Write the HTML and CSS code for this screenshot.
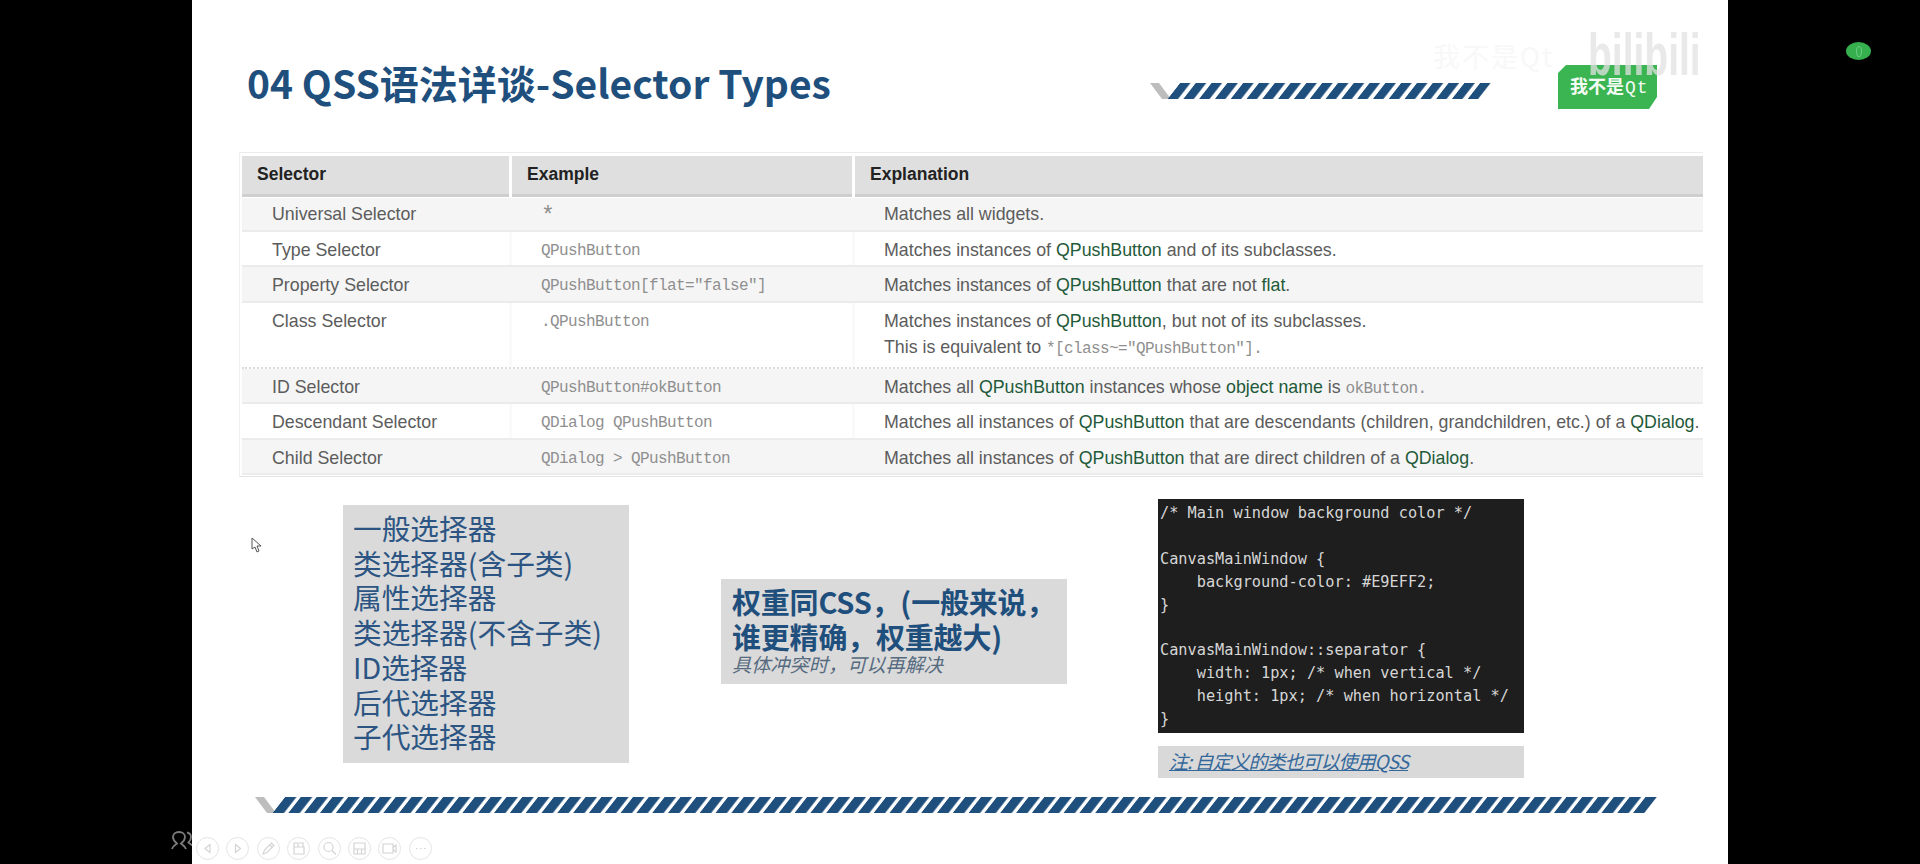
FILE: index.html
```html
<!DOCTYPE html>
<html lang="zh">
<head>
<meta charset="utf-8">
<title>QSS Selector Types</title>
<link rel="stylesheet" href="styles.css">
</head>
<body>
<div class="screen">
  <aside class="side side-left">
    <svg class="person" width="21" height="19" viewBox="0 0 21 19" fill="none" stroke="#7c7c7c" stroke-width="1.8">
      <path d="M1 18c.5-3 3.500-4 5-5.500C3.500 10.500 2 8.500 2 6c0-3 2.500-5 6-5s6 2 6 5c0 2.500-1.500 4.500-4 6.500 1.500 1.500 4 2.500 5 5.500"/>
      <path d="M16 1.500c2.500.5 4 2.500 4 4.500 0 2-1 4-2.500 5.500 1 1 2.500 1.500 3.500 3"/>
    </svg>
  </aside>
  <main class="slide">
    <header class="head">
      <h1 class="title">04 QSS语法详谈-Selector Types</h1>
      <svg class="stripe-top" width="341" height="16" viewBox="0 0 341 16">
        <defs>
          <pattern id="hatch-a" width="15.8" height="16" patternUnits="userSpaceOnUse" patternTransform="translate(30 0) skewX(-38)">
            <rect width="10.5" height="16" fill="#1f4f7d"/>
          </pattern>
        </defs>
        <polygon points="0,0 9,0 21,16 12,16" fill="#bdbdbd"/>
        <polygon points="17.500,16 30,0 341,0 328.500,16" fill="url(#hatch-a)"/>
      </svg>
      <div class="logo">
        <svg class="logo-shape" width="99" height="44" viewBox="0 0 99 44">
          <polygon points="8,0 99,0 99,32 91,44 0,44 0,8" fill="#3bb552"/>
        </svg>
        <span class="logo-text">我不是<span class="logo-qt">Qt</span></span>
      </div>
    </header>

    <section class="table">
      <div class="row row-head">
        <div class="hcell">Selector</div>
        <div class="hcell">Example</div>
        <div class="hcell">Explanation</div>
      </div>
      <div class="row row-first row-alt">
        <div class="cell">Universal Selector</div>
        <div class="cell code"><span class="star">*</span></div>
        <div class="cell">Matches all widgets.</div>
      </div>
      <div class="row">
        <div class="cell">Type Selector</div>
        <div class="cell code">QPushButton</div>
        <div class="cell">Matches instances of <b>QPushButton</b> and of its subclasses.</div>
      </div>
      <div class="row row-alt">
        <div class="cell">Property Selector</div>
        <div class="cell code">QPushButton[flat="false"]</div>
        <div class="cell">Matches instances of <b>QPushButton</b> that are not <b>flat</b>.</div>
      </div>
      <div class="row row-tall">
        <div class="cell">Class Selector</div>
        <div class="cell code">.QPushButton</div>
        <div class="cell">Matches instances of <b>QPushButton</b>, but not of its subclasses.<br>This is equivalent to <span class="code">*[class~="QPushButton"].</span></div>
      </div>
      <div class="row row-alt">
        <div class="cell">ID Selector</div>
        <div class="cell code">QPushButton#okButton</div>
        <div class="cell">Matches all <b>QPushButton</b> instances whose <b>object name</b> is <span class="code">okButton.</span></div>
      </div>
      <div class="row">
        <div class="cell">Descendant Selector</div>
        <div class="cell code">QDialog QPushButton</div>
        <div class="cell">Matches all instances of <b>QPushButton</b> that are descendants (children, grandchildren, etc.) of a <b>QDialog</b>.</div>
      </div>
      <div class="row row-alt">
        <div class="cell">Child Selector</div>
        <div class="cell code">QDialog &gt; QPushButton</div>
        <div class="cell">Matches all instances of <b>QPushButton</b> that are direct children of a <b>QDialog</b>.</div>
      </div>
    </section>

    <section class="lower">
      <div class="box-list">
        <div>一般选择器</div>
        <div>类选择器(含子类)</div>
        <div>属性选择器</div>
        <div>类选择器(不含子类)</div>
        <div>ID选择器</div>
        <div>后代选择器</div>
        <div>子代选择器</div>
      </div>
      <div class="box-note">
        <div class="note-main">权重同CSS，(一般来说，</div>
        <div class="note-main">谁更精确，权重越大)</div>
        <div class="note-sub">具体冲突时，可以再解决</div>
      </div>
      <div class="code-col">
        <pre class="code-box">/* Main window background color */

CanvasMainWindow {
    background-color: #E9EFF2;
}

CanvasMainWindow::separator {
    width: 1px; /* when vertical */
    height: 1px; /* when horizontal */
}</pre>
        <div class="code-note">注: 自定义的类也可以使用QSS</div>
      </div>
    </section>

    <svg class="stripe-bottom" width="1402" height="16" viewBox="0 0 1402 16">
      <defs>
        <pattern id="hatch-b" width="15.82" height="16" patternUnits="userSpaceOnUse" patternTransform="translate(30 0) skewX(-38)">
          <rect width="11.5" height="16" fill="#1f4f7d"/>
        </pattern>
      </defs>
      <polygon points="0,0 9,0 21,16 12,16" fill="#bdbdbd"/>
      <polygon points="17.500,16 30,0 1402,0 1389.500,16" fill="url(#hatch-b)"/>
    </svg>

    <nav class="tools">
      <span class="tool"><svg width="23" height="23" viewBox="0 0 23 23"><path d="M14 7.500l-5 4 5 4z"/></svg></span>
      <span class="tool"><svg width="23" height="23" viewBox="0 0 23 23"><path d="M9.500 7.500l5 4-5 4z"/></svg></span>
      <span class="tool"><svg width="23" height="23" viewBox="0 0 23 23"><path d="M6 17l1.500-4 7-7 2.500 2.500-7 7zM13 8l2.500 2.500"/></svg></span>
      <span class="tool"><svg width="23" height="23" viewBox="0 0 23 23"><path d="M7 6h4v4H7zM12 6h4v4M7 10v7h10v-7h-6"/></svg></span>
      <span class="tool"><svg width="23" height="23" viewBox="0 0 23 23"><circle cx="10.500" cy="10" r="4.500"/><path d="M14 13.500l4 4"/></svg></span>
      <span class="tool"><svg width="23" height="23" viewBox="0 0 23 23"><path d="M6 6h11v11H6zM6 12h11M9.500 12v5M13.500 12v5"/></svg></span>
      <span class="tool"><svg width="23" height="23" viewBox="0 0 23 23"><path d="M5 7h10v9H5zM15 10.500l3-2.500v7l-3-2.500"/></svg></span>
      <span class="tool"><svg width="23" height="23" viewBox="0 0 23 23"><path d="M7 11.500h1.500M11 11.500h1.500M15 11.500h1.500"/></svg></span>
    </nav>

    <div class="watermark">
      <span class="wm-cn">我不是Qt</span>
      <span class="wm-logo">bilibili</span>
    </div>
    <svg class="cursor" width="11" height="16" viewBox="0 0 11 16">
      <path d="M1 1v11l3-2 2 5 2-1-2-5h4z" fill="#fff" stroke="#555" stroke-width="1"/>
    </svg>
  </main>
  <aside class="side side-right">
    <span class="dot"></span>
  </aside>
</div>
</body>
</html>
```
FILE: styles.css
```css
* { box-sizing: border-box; }
html, body { margin: 0; padding: 0; }
body {
  background: #000;
  font-family: "Liberation Sans", "Noto Sans CJK SC", sans-serif;
}
.screen { display: flex; width: 1920px; height: 864px; background: #000; overflow: hidden; }
.side { width: 192px; flex: none; }
.side-left { padding: 831px 0 0 171px; }
.person { display: block; }
.side-right { padding: 42px 0 0 118px; }
.dot { display: flex; align-items: center; justify-content: center; width: 25px; height: 18px; border-radius: 50%; background: #36b04f; }
.dot::after { content: ""; width: 4px; height: 9px; border: 1px solid #6fcb83; border-radius: 50%; }

.slide { position: relative; width: 1536px; height: 864px; flex: none; background: #fff; display: flex; flex-direction: column; }

.head { display: flex; align-items: flex-start; height: 152px; padding: 65px 71px 0 55px; }
.title {
  margin: -11px 0 0;
  font: 700 39px/56px "Noto Sans CJK SC", sans-serif;
  color: #1f4f7d;
  white-space: nowrap;
}
.stripe-top { margin: 18px 67px 0 auto; flex: none; }
.logo { position: relative; width: 99px; height: 44px; flex: none; }
.logo-shape { display: block; }
.logo-text {
  position: absolute; left: 12px; top: 7px;
  font: 700 18px/26px "Noto Sans CJK SC", sans-serif;
  color: #f4fbf5; white-space: nowrap;
}
.logo-qt { font: 400 18px/26px "Liberation Mono", monospace; letter-spacing: 1px; margin-left: 1px; }

.table {
  width: 1464px;
  margin-left: 47px;
  padding: 3px 0 0 2px;
  border-top: 1px solid #ececec;
  border-left: 1px solid #f0f0f0;
  border-bottom: 1px solid #e4e4e4;
  height: 325px;
}
.row { display: grid; grid-template-columns: 270px 343px 1fr; height: 35.5px; border-bottom: 2px solid #ebebeb; }
.row-head { height: 41px; border-bottom: 0; margin-bottom: 1px; }
.row-first { height: 33.5px; }
.row-alt { background: #f5f5f5; }
.row-tall { height: 66px; border-bottom: 2px dotted #dcdcdc; }
.hcell {
  margin-right: 3px;
  padding: 0 0 0 15px;
  background: #dfdfdf;
  border-bottom: 3px solid #cfcfcf;
  font: 700 17.500px/37px "Liberation Sans", sans-serif;
  color: #222;
}
.hcell:last-child { margin-right: 0; }
.cell {
  padding: 5px 0 0 29px;
  font-size: 17.800px;
  line-height: 26px;
  color: #5c5c5c;
  white-space: nowrap;
  border-right: 3px solid #fafafa;
}
.cell:first-child { padding-left: 30px; }
.row-first .cell { padding-top: 3px; }
.cell:last-child { border-right: 0; }
.row-alt .cell { border-right-color: transparent; }
.cell b { font-weight: 400; color: #1f5a3a; }
.code { font-family: "Liberation Mono", monospace; font-size: 16px; letter-spacing: -0.6px; color: #8f8f8f; }
.cell.code { padding-top: 6px; }
.row-first .cell.code { padding-top: 3px; }
.star { font-size: 23px; vertical-align: -5px; }

.lower { display: flex; align-items: flex-start; height: 280px; margin-top: 22px; }
.box-list {
  width: 286px; height: 258px;
  margin: 6px 0 0 151px;
  padding: 6px 0 0 10px;
  background: #dadada;
  font: 400 28.700px/34.700px "Noto Sans CJK SC", sans-serif;
  color: #2c5583;
  white-space: nowrap;
}
.box-note {
  width: 346px; height: 105px;
  margin: 80px 0 0 92px;
  padding: 5px 0 0 11px;
  background: #dadada;
  color: #1f4f7d;
  white-space: nowrap;
}
.note-main { font: 700 29px/34.500px "Noto Sans CJK SC", sans-serif; letter-spacing: -0.2px; }
.note-sub { font: italic 400 19.200px/22px "Noto Sans CJK SC", sans-serif; color: #566a80; }
.code-col { width: 366px; margin-left: 91px; }
.code-box {
  margin: 0;
  height: 234px;
  padding: 3px 0 0 2px;
  background: #1e1e1e;
  color: #d6d6d6;
  font: 400 15.250px/22.900px "DejaVu Sans Mono", monospace;
}
.code-note {
  height: 32px;
  margin-top: 13px;
  padding-left: 11px;
  background: #d9d9d9;
  font: italic 400 19px/30px "Noto Sans CJK SC", sans-serif;
  letter-spacing: -1px;
  color: #34689b;
  text-decoration: underline;
  white-space: nowrap;
}

.stripe-bottom { display: block; flex: none; margin: 18px 0 0 63px; }

.tools { display: flex; gap: 7.400px; margin: 24px 0 0 4px; }
.tool { display: block; width: 23px; height: 23px; border-radius: 50%; border: 1px solid #e4e4e4; flex: none; }
.tool svg { display: block; margin: -1px; fill: none; stroke: #d4d4d4; stroke-width: 1.2; }

.watermark { position: absolute; left: 1241px; top: 23px; display: flex; align-items: flex-start; pointer-events: none; }
.wm-cn { width: 155px; margin-top: 17px; font: 400 27px/32px "Noto Sans CJK SC", sans-serif; letter-spacing: 2px; color: #f8f8f8; white-space: nowrap; }
.wm-logo { font: 700 60px/64px "Liberation Sans", sans-serif; color: rgba(225, 225, 225, 0.75); white-space: nowrap; transform: scaleX(0.65); transform-origin: left top; }

.cursor { position: absolute; left: 59px; top: 537px; }
```
